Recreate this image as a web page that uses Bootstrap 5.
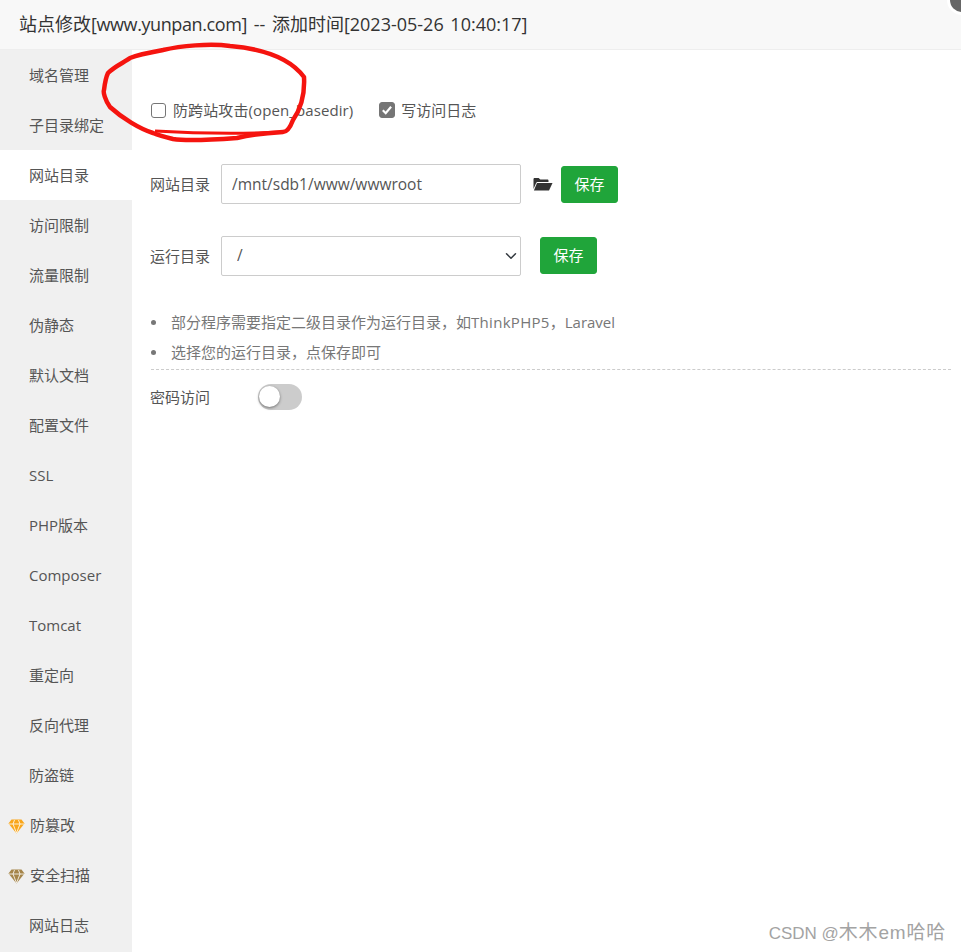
<!DOCTYPE html>
<html lang="zh-CN">
<head>
  <meta charset="UTF-8">
  <title>站点修改</title>
  <link href="https://cdn.jsdelivr.net/npm/bootstrap@5.3.3/dist/css/bootstrap.min.css" rel="stylesheet">
  <style>
    html, body { height: 952px; overflow: hidden; }
    body { background: #fff; color: #555; font-family: "Open Sans", "Noto Sans CJK SC", sans-serif; font-size: 15px; position: relative; }
    .site-head { height: 50px; background: #f8f8f8; border-bottom: 1px solid #eee; padding-left: 19px; font-size: 18px; line-height: 48px; color: #333; word-spacing: 2px; }
    .site-head .dom { letter-spacing: -.4px; }
    .side-menu { width: 132px; height: 902px; background: #f0f0f0; flex: none; }
    .side-item { height: 50px; line-height: 50px; padding-left: 29px; color: #555; white-space: nowrap; position: relative; }
    .side-item.on { background: #fff; color: #555; }
    .side-item.paid { padding-left: 30px; }
    .side-item svg { position: absolute; left: 8px; top: 19px; }
    .main-pane { flex: 1; padding: 0 10px 0 19px; min-width: 0; }
    .check-row { margin-top: 49px; height: 22px; gap: 26px; }
    .check-row label { display: flex; align-items: center; gap: 7px; }
    .check-row label:first-child { letter-spacing: .1px; }
    .check-row label + label { gap: 6px; }
    .box { width: 15px; height: 15px; border: 1px solid #767676; border-radius: 3px; background: #fff; display: block; }
    .box.checked { width: 16px; height: 16px; background: #757575; border-color: #757575; }
    .field-name { width: 71px; margin-left: -1px; flex: none; color: #555; }
    .path-input.form-control, .path-select.form-select { width: 300px; height: 40px; border: 1px solid #ccc; border-radius: 2px; font-size: 15.5px; color: #555; box-shadow: none; flex: none; }
    .path-input.form-control { padding: 0 10px; }
    .path-select.form-select { padding: 0 10px 0 15px; background-position: right 1px center; }
    .save-btn.btn { background: #20a53a; border-color: #20a53a; color: #fff; width: 57px; height: 37px; padding: 0; font-size: 15px; border-radius: 3px; }
    .tips-list { list-style: none; color: #777; margin: 31px 0 0; padding: 0 0 2px 20px; }
    .tips-list li { line-height: 30px; height: 30px; position: relative; }
    .tips-list li::before { content: ""; position: absolute; left: -20px; top: 13px; width: 5px; height: 5px; border-radius: 50%; background: #777; }
    .tips-list .word { letter-spacing: .3px; }
    .dash-line { border-top: 1px dashed #ccc; }
    .slide-off { width: 44px; height: 26px; border-radius: 13px; background: #ccc; position: relative; display: block; }
    .slide-off::after { content: ""; position: absolute; left: 1px; top: 2px; width: 21px; height: 21px; border-radius: 50%; background: #fff; box-shadow: 0 1px 3px rgba(0,0,0,.45); }
    .red-mark { position: absolute; left: 100px; top: 40px; pointer-events: none; }
    .close-dot { position: absolute; left: 950px; top: -12px; width: 24px; height: 24px; border-radius: 50%; background: #666; box-shadow: 0 0 0 3px #fff; }
    .water { position: absolute; right: 15px; top: 920px; font-family: "Liberation Sans", "Noto Sans CJK SC", sans-serif; font-size: 19px; line-height: 26px; color: #a3a3a3; letter-spacing: .8px; }
    .water .tag { font-size: 17px; letter-spacing: 0; }
  </style>
</head>
<body>

<div class="site-head">站点修改<span class="dom">[www.yunpan.com]</span> -- 添加时间[2023-05-26 10:40:17]</div>

<div class="d-flex">
  <div class="side-menu" id="menu"></div>

  <div class="main-pane">
    <div class="check-row d-flex align-items-center">
      <label><span class="box"></span>防跨站攻击(open_basedir)</label>
      <label><span class="box checked"><svg width="14" height="14" viewBox="0 0 13 13" class="d-block"><path d="M2.6 6.8l2.7 2.7 5-6" fill="none" stroke="#fff" stroke-width="2"/></svg></span>写访问日志</label>
    </div>

    <div class="d-flex align-items-center" style="margin-top:43px">
      <span class="field-name">网站目录</span>
      <input class="form-control path-input" value="/mnt/sdb1/www/wwwroot">
      <svg style="margin-left:12px;margin-right:8px" width="20" height="14" viewBox="0 0 20 14"><path d="M0.5 12V2.2C.5 1.4 1 1 1.700 1h4l1.600 1.600h7c.8 0 1.200.5 1.200 1.200V5H5C4 5 3.300 5.500 3 6.300L.5 12z" fill="#333"/><path d="M4 6h15.500L16 13.500H.9z" fill="#333"/></svg>
      <button class="btn save-btn">保存</button>
    </div>

    <div class="d-flex align-items-start" style="margin-top:32px">
      <span class="field-name align-self-center">运行目录</span>
      <select class="form-select path-select"><option>/</option></select>
      <button class="btn save-btn" style="margin-left:19px;margin-top:1px">保存</button>
    </div>

    <ul class="tips-list">
      <li>部分程序需要指定二级目录作为运行目录，如<span class="word">ThinkPHP5</span>，Laravel</li>
      <li>选择您的运行目录，点保存即可</li>
    </ul>
    <div class="dash-line"></div>

    <div class="d-flex align-items-center" style="margin-top:14px">
      <span class="field-name" style="width:108px">密码访问</span>
      <span class="slide-off"></span>
    </div>
  </div>
</div>

<svg class="red-mark" width="210" height="105" viewBox="0 0 210 105">
  <path d="M63 10C80 6 110 3 130 6C165 9 190 18 204 37C205 55 200 70 193 80C190 88 187 92 183 92C165 93 150 95 137 98C110 100 85 101 73 99C65 97 58 95 53 93C40 89 22 78 10 67C5 60 3 52 4 50C5 42 6 37 8 33C15 26 25 22 30 18C40 14 52 12 63 10Z" fill="none" stroke="#f5140f" stroke-width="4.500" stroke-linejoin="round"/>
  <path d="M55 91C90 93 140 94 183 92" fill="none" stroke="#f5140f" stroke-width="3"/>
</svg>

<span class="close-dot"></span>
<div class="water"><span class="tag">CSDN @</span>木木em哈哈</div>

<script>
// sidebar entries, gem colour only on the paid ones
const items = ['域名管理','子目录绑定','网站目录','访问限制','流量限制','伪静态','默认文档','配置文件','SSL','PHP版本','Composer','Tomcat','重定向','反向代理','防盗链','防篡改','安全扫描','网站日志'];
const gems = { '防篡改': '#f9a61a', '安全扫描': '#a5854a' };
const menu = document.getElementById('menu');
items.forEach(function (name) {
  const div = document.createElement('div');
  div.className = 'side-item' + (name === '网站目录' ? ' on' : '') + (gems[name] ? ' paid' : '');
  div.textContent = name;
  if (gems[name]) {
    div.insertAdjacentHTML('afterbegin', '<svg width="17" height="15" viewBox="0 0 17 15"><path d="M3.500 0.500h10L16.500 4.500 8.500 14.500.5 4.500z" fill="' + gems[name] + '"/><path d="M1 5h15M5 5l3.500 9L12 5M5 5L6.500 1M12 5L10.500 1" stroke="#fff" stroke-width=".8" fill="none"/></svg>');
  }
  menu.appendChild(div);
});
</script>
</body>
</html>
